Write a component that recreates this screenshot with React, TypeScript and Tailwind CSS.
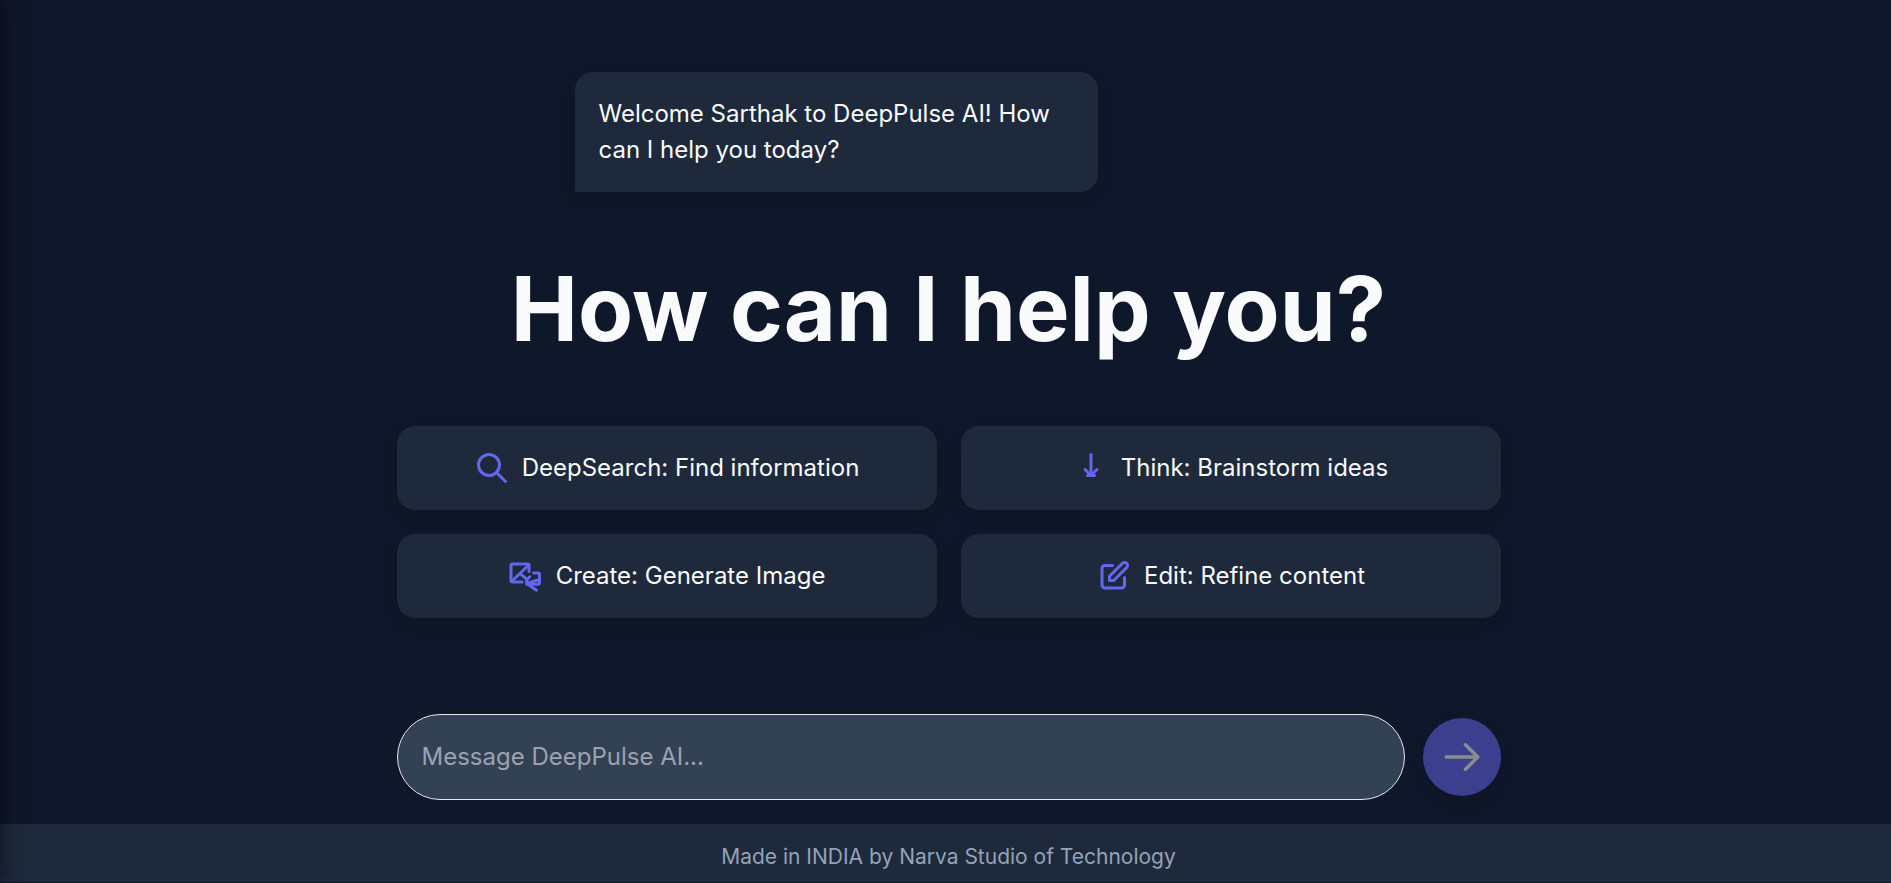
import React, { useState } from "react";

interface SuggestionProps {
  label: string;
  paths: string[];
}

const suggestions: SuggestionProps[] = [
  {
    label: "DeepSearch: Find information",
    paths: ["M21 21l-6-6m2-5a7 7 0 11-14 0 7 7 0 0114 0z"],
  },
  {
    label: "Think: Brainstorm ideas",
    paths: ["M9.663 17h4.673", "M12 3v14", "M8 13l4 4 4-4"],
  },
  {
    label: "Create: Generate Image",
    paths: [
      "M9.500 16H3a1 1 0 01-1-1V5a1 1 0 011-1h10a1 1 0 011 1v4",
      "M2.500 15.500L14 4.500",
      "M8.500 10.800l3 2.400 1 1.300 2-2",
      "M17 10h3a1 1 0 011 1v5.500a1 1 0 01-1 1h-7.500v-3",
      "M20.500 14.500l-8 2.500 6.500 4.500",
    ],
  },
  {
    label: "Edit: Refine content",
    paths: [
      "M11 5H6a2 2 0 00-2 2v11a2 2 0 002 2h11a2 2 0 002-2v-5m-1.414-9.414a2 2 0 112.828 2.828L11.828 15H9v-2.828l8.586-8.586z",
    ],
  },
];

const SuggestionButton = ({ label, paths }: SuggestionProps) => (
  <button
    type="button"
    className="flex items-center justify-center gap-3 rounded-[18px] bg-[#1e293b] p-6 text-2xl leading-9 font-normal text-[#f8fafc] shadow-[0_6px_18px_rgba(0,0,0,0.1)]"
  >
    <svg
      className="size-9 shrink-0 text-[#6366f1]"
      viewBox="0 0 24 24"
      fill="none"
      stroke="currentColor"
      strokeWidth={2}
      strokeLinecap="round"
      strokeLinejoin="round"
      aria-hidden="true"
    >
      {paths.map((d) => (
        <path key={d} d={d} />
      ))}
    </svg>
    <span>{label}</span>
  </button>
);

export default function App() {
  const [message, setMessage] = useState("");

  return (
    <div className="relative flex min-h-screen flex-col overflow-hidden bg-[#0f172a] font-['Inter',sans-serif] text-[#f8fafc]">
      {/* Shadow of the closed sidebar */}
      <div className="pointer-events-none absolute inset-y-0 right-full z-10 w-96 shadow-[0_0_22px_rgba(0,0,0,0.6)]" />

      <main className="flex w-full grow flex-col items-center pt-[72px] pr-6 pb-6 pl-[30px]">
        <div className="w-full max-w-[748px]">
          <div className="w-fit max-w-[523px] rounded-[18px] rounded-bl-none bg-[#1e293b] p-6 text-2xl leading-9 shadow-[0_6px_18px_rgba(0,0,0,0.1)]">
            Welcome Sarthak to DeepPulse AI! How can I help you today?
          </div>
        </div>

        <h1 className="mt-[72px] text-center text-[90px] leading-[90px] font-bold">
          How can I help you?
        </h1>

        <div className="mt-[72px] grid w-full max-w-[1104px] grid-cols-2 gap-6">
          {suggestions.map((item) => (
            <SuggestionButton key={item.label} {...item} />
          ))}
        </div>

        <form
          className="mt-auto flex w-full max-w-[1104px] items-center gap-[18px]"
          onSubmit={(e) => e.preventDefault()}
        >
          <input
            type="text"
            aria-label="Message DeepPulse AI"
            placeholder="Message DeepPulse AI..."
            value={message}
            onChange={(e) => setMessage(e.target.value)}
            className="min-w-0 grow rounded-full border border-[#e5e7eb] bg-[#334155] p-6 text-2xl leading-9 text-[#f8fafc] outline-none placeholder:text-[#9ca3af]"
          />
          <button
            type="submit"
            aria-label="Send message"
            disabled={!message}
            className="flex size-[78px] shrink-0 items-center justify-center rounded-full bg-[#3b3f8e] text-[#888c94] shadow-[0_6px_18px_rgba(0,0,0,0.1)]"
          >
            <svg
              className="size-[42px]"
              viewBox="0 0 24 24"
              fill="none"
              stroke="currentColor"
              strokeWidth={2}
              strokeLinecap="round"
              strokeLinejoin="round"
              aria-hidden="true"
            >
              <path d="M14 5l7 7m0 0l-7 7m7-7H3" />
            </svg>
          </button>
        </form>
      </main>

      <footer className="border-b border-[#0f172a] bg-[#1e293b] pt-[18px] pb-2.5 pl-1.5 text-center text-[21px] leading-[30px] text-[#94a3b8]">
        Made in INDIA by Narva Studio of Technology
      </footer>
    </div>
  );
}
